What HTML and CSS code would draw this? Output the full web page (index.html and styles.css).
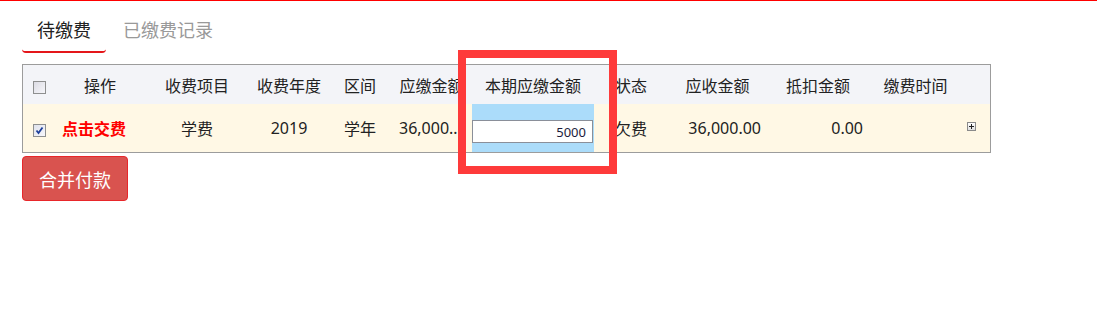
FILE: index.html
```html
<!DOCTYPE html>
<html>
<head>
<meta charset="utf-8">
<link rel="stylesheet" href="styles.css">
</head>
<body>
<div class="topline"></div>
<div class="page">
  <div class="tabs">
    <span class="tab active">待缴费</span>
    <span class="tab">已缴费记录</span>
  </div>

  <div class="grid-wrap">
    <table class="grid">
      <colgroup>
        <col style="width:32px">
        <col style="width:90px">
        <col style="width:104px">
        <col style="width:80px">
        <col style="width:62px">
        <col style="width:81px">
        <col style="width:122px">
        <col style="width:74px">
        <col style="width:99px">
        <col style="width:102px">
        <col style="width:93px">
        <col style="width:28px">
      </colgroup>
      <thead>
        <tr>
          <th><span class="chk"></span></th>
          <th>操作</th>
          <th>收费项目</th>
          <th>收费年度</th>
          <th>区间</th>
          <th>应缴金额</th>
          <th>本期应缴金额</th>
          <th>状态</th>
          <th>应收金额</th>
          <th>抵扣金额</th>
          <th>缴费时间</th>
          <th></th>
        </tr>
      </thead>
      <tbody>
        <tr>
          <td><span class="chk checked"><svg width="9" height="9" viewBox="0 0 9 9"><path d="M1.5 4.5 L3.5 7 L7.5 1.5" fill="none" stroke="#1d3f9a" stroke-width="1.8"/></svg></span></td>
          <td class="pay"><a>点击交费</a></td>
          <td>学费</td>
          <td>2019</td>
          <td>学年</td>
          <td class="clip">36,000.00</td>
          <td class="edit"><input class="amount" type="text" value="5000"></td>
          <td>欠费</td>
          <td class="num">36,000.00</td>
          <td class="num">0.00</td>
          <td></td>
          <td class="more"><span class="plus"></span></td>
        </tr>
      </tbody>
    </table>
    <div class="mark"></div>
  </div>

  <button class="btn-pay">合并付款</button>
</div>
</body>
</html>
```

FILE: styles.css
```css
body {
  margin: 0;
  font-family: "Noto Sans", "Noto Sans CJK SC", sans-serif;
  color: #222;
  background: #fff;
}
.topline {
  height: 1px;
  background: #f00;
}
.page {
  padding: 0 22px;
}
.tabs {
  padding-top: 17px;
  display: flex;
}
.tab {
  font-size: 18px;
  line-height: 24px;
  padding: 0 15px 9px;
  color: #999;
  border-bottom: 2px solid transparent;
}
.tab.active {
  color: #222;
  border-bottom-color: #e4161a;
  border-radius: 0 0 4px 4px;
}
.tab + .tab {
  margin-left: 2px;
}

.grid-wrap {
  position: relative;
  margin-top: 11px;
}
.grid {
  width: 969px;
  table-layout: fixed;
  border-collapse: separate;
  border-spacing: 0;
  border: 1px solid #9c9c9c;
  font-size: 16px;
}
.grid th {
  height: 39px;
  padding: 0;
  font-weight: normal;
  color: #222;
  background: #f3f4f8;
  text-align: center;
  white-space: nowrap;
  overflow: hidden;
}
.grid td {
  height: 48px;
  padding: 0;
  background: #fff8e5;
  text-align: center;
  white-space: nowrap;
}
.grid td.pay {
  padding-right: 12px;
}
.pay a {
  color: #f00;
  font-weight: bold;
}
.grid td.clip {
  padding: 0 8px;
  overflow: hidden;
  text-overflow: ellipsis;
}
.grid td.num {
  text-align: right;
  padding-right: 6px;
}
.grid td.edit {
  height: 32px;
  background: #abdcfa;
  vertical-align: top;
  padding-top: 16px;
  text-align: left;
  line-height: 0;
}
.amount {
  box-sizing: border-box;
  width: 121px;
  height: 23px;
  margin: 0;
  border: 1px solid #8a8f99;
  padding: 0 6px;
  font-family: "Noto Sans", sans-serif;
  font-size: 13px;
  color: #1c1c3c;
  text-align: right;
  background: #fff;
}
.grid td.more {
  text-align: left;
  padding-left: 5px;
}

.chk {
  display: inline-block;
  box-sizing: border-box;
  width: 13px;
  height: 13px;
  border: 1px solid #8e8f8f;
  background: linear-gradient(135deg, #dcdce4, #f6f6fa);
  vertical-align: middle;
  position: relative;
  top: 1px;
}
.chk.checked {
  background: linear-gradient(135deg, #dfe2ec, #f7f7fb);
}
.chk svg {
  display: block;
  margin: 1px 0 0 1px;
}
.plus {
  display: inline-block;
  box-sizing: border-box;
  width: 9px;
  height: 9px;
  border: 1px solid #8a8a8a;
  background: linear-gradient(#fff, #dedede);
  position: relative;
  vertical-align: middle;
  top: -3px;
}
.plus::before,
.plus::after {
  content: "";
  position: absolute;
  background: #222;
}
.plus::before {
  left: 1px;
  top: 3px;
  width: 5px;
  height: 1px;
}
.plus::after {
  left: 3px;
  top: 1px;
  width: 1px;
  height: 5px;
}

.mark {
  position: absolute;
  left: 436px;
  top: -14px;
  width: 143px;
  height: 108px;
  border: 8px solid #fe3a3a;
}

.btn-pay {
  display: block;
  margin-top: 3px;
  width: 106px;
  height: 45px;
  padding: 0;
  border: 1px solid #e8262a;
  border-radius: 4px;
  background: #d9534f;
  color: #fff;
  font-family: "Noto Sans CJK SC", sans-serif;
  font-size: 18px;
}
```
